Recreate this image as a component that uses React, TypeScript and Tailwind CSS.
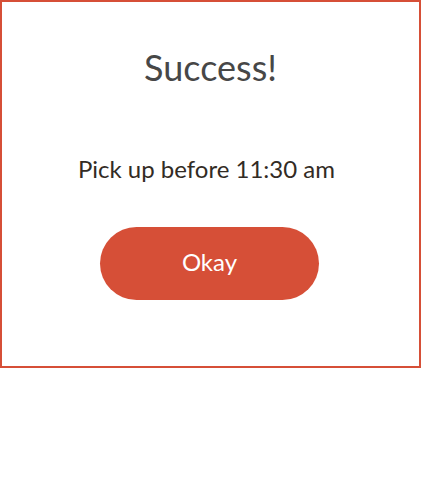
import React from "react";

const App: React.FC = () => {
  return (
    <div className="w-[421px] h-[504px] bg-white" style={{ fontFamily: "Lato, 'Noto Sans', sans-serif" }}>
      <div className="h-[368px] border-2 border-[#d64f37] flex flex-col items-center pt-[43px]">
        <h1 className="text-[36px] leading-[44px] text-[#474747]">Success!</h1>

        <p className="mt-[64px] pr-2 text-[24px] leading-[32px] text-[#322b24]">
          Pick up before 11:30 am
        </p>

        <button className="mt-[42px] mr-[2px] w-[219px] h-[73px] rounded-full bg-[#d64f37] text-white text-[24px] leading-[32px] pb-[4px]">
          Okay
        </button>
      </div>
    </div>
  );
};

export default App;
